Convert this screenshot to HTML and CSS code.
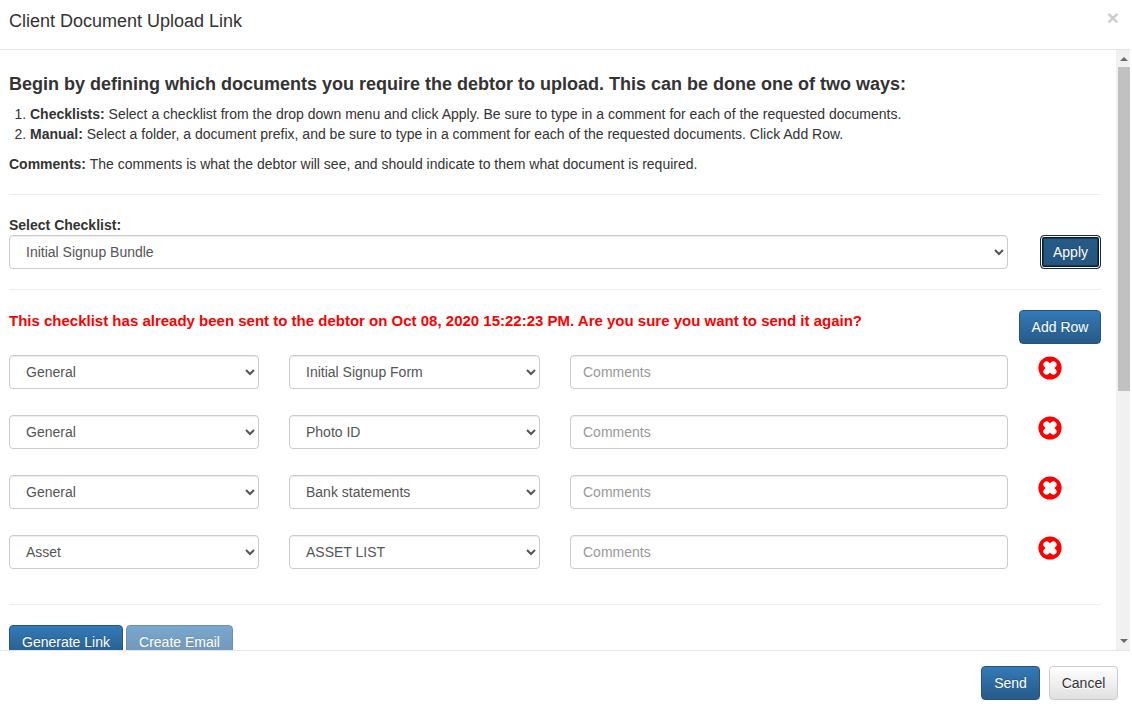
FILE: index.html
```html
<!DOCTYPE html>
<html lang="en">
<head>
<meta charset="utf-8">
<title>Client Document Upload Link</title>
<link rel="stylesheet" href="styles.css">
</head>
<body>
<div class="modal">
  <header class="modal-header">
    <h1 class="modal-title">Client Document Upload Link</h1>
    <span class="close">×</span>
  </header>
  <div class="modal-middle">
    <main class="modal-body">
      <h4 class="intro">Begin by defining which documents you require the debtor to upload. This can be done one of two ways:</h4>
      <ol class="steps">
        <li><b>Checklists:</b> Select a checklist from the drop down menu and click Apply. Be sure to type in a comment for each of the requested documents.</li>
        <li><b>Manual:</b> Select a folder, a document prefix, and be sure to type in a comment for each of the requested documents. Click Add Row.</li>
      </ol>
      <p class="note"><b>Comments:</b> The comments is what the debtor will see, and should indicate to them what document is required.</p>
      <hr class="rule rule-a">
      <div class="checklist">
        <div class="checklist-field">
          <label class="field-label" for="cl">Select Checklist:</label>
          <select id="cl" class="control"><option>Initial Signup Bundle</option></select>
        </div>
        <button class="btn btn-primary btn-focus">Apply</button>
      </div>
      <hr class="rule rule-b">
      <div class="warning-row">
        <p class="warning">This checklist has already been sent to the debtor on Oct 08, 2020 15:22:23 PM. Are you sure you want to send it again?</p>
        <button class="btn btn-primary btn-addrow">Add Row</button>
      </div>
      <div class="rows">
        <div class="row">
          <select class="control"><option>General</option></select>
          <select class="control"><option>Initial Signup Form</option></select>
          <input class="control" placeholder="Comments">
          <svg class="remove" viewBox="0 0 24 24"><circle cx="12" cy="12" r="11.6" fill="#f00"/><path d="M8.6 8.6l6.8 6.8M15.4 8.6l-6.8 6.8" stroke="#fff" stroke-width="6.4" stroke-linecap="round"/></svg>
        </div>
        <div class="row">
          <select class="control"><option>General</option></select>
          <select class="control"><option>Photo ID</option></select>
          <input class="control" placeholder="Comments">
          <svg class="remove" viewBox="0 0 24 24"><circle cx="12" cy="12" r="11.6" fill="#f00"/><path d="M8.6 8.6l6.8 6.8M15.4 8.6l-6.8 6.8" stroke="#fff" stroke-width="6.4" stroke-linecap="round"/></svg>
        </div>
        <div class="row">
          <select class="control"><option>General</option></select>
          <select class="control"><option>Bank statements</option></select>
          <input class="control" placeholder="Comments">
          <svg class="remove" viewBox="0 0 24 24"><circle cx="12" cy="12" r="11.6" fill="#f00"/><path d="M8.6 8.6l6.8 6.8M15.4 8.6l-6.8 6.8" stroke="#fff" stroke-width="6.4" stroke-linecap="round"/></svg>
        </div>
        <div class="row">
          <select class="control"><option>Asset</option></select>
          <select class="control"><option>ASSET LIST</option></select>
          <input class="control" placeholder="Comments">
          <svg class="remove" viewBox="0 0 24 24"><circle cx="12" cy="12" r="11.6" fill="#f00"/><path d="M8.6 8.6l6.8 6.8M15.4 8.6l-6.8 6.8" stroke="#fff" stroke-width="6.4" stroke-linecap="round"/></svg>
        </div>
      </div>
      <hr class="rule rule-c">
      <div class="actions">
        <button class="btn btn-primary">Generate Link</button>
        <button class="btn btn-primary btn-disabled">Create Email</button>
      </div>
    </main>
    <div class="scrollbar">
      <span class="arrow arrow-up"></span>
      <span class="thumb"></span>
      <span class="track"></span>
      <span class="arrow arrow-down"></span>
    </div>
  </div>
  <footer class="modal-footer">
    <button class="btn btn-primary btn-send">Send</button>
    <button class="btn btn-default">Cancel</button>
  </footer>
</div>
</body>
</html>
```
FILE: styles.css
```css
* { box-sizing: border-box; }
html, body { margin: 0; height: 100%; overflow: hidden; background: #fff; }
body { font: 14px/20px "Liberation Sans", Arial, sans-serif; color: #333; }
.modal { width: 1130px; height: 711px; display: flex; flex-direction: column; }
.modal-header { height: 50px; flex: none; display: flex; justify-content: space-between; border-bottom: 1px solid #e5e5e5; padding: 0 11px 0 9px; }
.modal-title { margin: 11px 0 0; font-size: 18px; line-height: 20px; font-weight: 400; }
.close { font-size: 21px; font-weight: 700; line-height: 21px; color: #000; opacity: .2; margin-top: 7px; }
.modal-middle { flex: 1; min-height: 0; display: flex; }
.modal-body { flex: 1; min-width: 0; overflow: hidden; padding: 0 15px 0 9px; }
.intro { margin: 24px 0 0; font-size: 18px; line-height: 20px; font-weight: 700; }
.steps { margin: 10px 0 0; padding-left: 21px; color: #333; }
.note { margin: 10px 0 0; }
.rule { border: 0; border-top: 1px solid #eee; margin: 0; }
.rule-a { margin-top: 20px; }
.rule-b { margin-top: 20px; }
.rule-c { margin-top: 35px; }
.checklist { display: flex; align-items: flex-end; gap: 32px; margin-top: 20px; }
.checklist-field { flex: 1; min-width: 0; }
.field-label { display: block; font-weight: 700; line-height: 20px; }
.control { display: block; height: 34px; width: 100%; padding: 6px 12px; font: 14px/20px "Liberation Sans", Arial, sans-serif; color: #555; background: #fff; border: 1px solid #ccc; border-radius: 4px; box-shadow: inset 0 1px 1px rgba(0,0,0,.075); }
.control::placeholder { color: #999; opacity: 1; }
.warning-row { display: flex; justify-content: space-between; align-items: flex-start; margin-top: 20px; }
.warning { margin: 1px 0 0; font-weight: 700; color: #f00; font-size: 15px; }
.rows { display: flex; flex-direction: column; gap: 26px; margin-top: 11px; }
.row { display: grid; grid-template-columns: 250px 251px 438px 24px; column-gap: 30px; align-items: start; }
.remove { width: 24px; height: 24px; margin-top: 1px; }
.actions { display: flex; gap: 3px; margin-top: 20px; }
.btn { font: 14px/20px "Liberation Sans", Arial, sans-serif; height: 34px; padding: 6px 0; border: 1px solid #245580; border-radius: 4px; white-space: nowrap; width: 114px; }
.btn-primary { color: #fff; background: linear-gradient(#337ab7, #265a88); text-shadow: 0 -1px 0 rgba(0,0,0,.2); }
.btn-disabled { opacity: .65; width: 107px; }
.btn-focus { width: 61px; background: linear-gradient(#265a88, #245580); border-color: #122b40; box-shadow: inset 0 0 0 1px #fff, inset 0 0 0 2.5px #0d1a26; }
.btn-addrow { width: 82px; }
.btn-send { width: 59px; }
.btn-default { width: 69px; color: #333; background: linear-gradient(#fff, #e0e0e0); border-color: #ccc; text-shadow: 0 1px 0 #fff; }
.scrollbar { width: 14px; flex: none; display: flex; flex-direction: column; background: #f1f1f1; }
.arrow { height: 17px; flex: none; position: relative; }
.arrow::after { content: ""; position: absolute; left: 4px; border: 4px solid transparent; }
.arrow-up::after { top: 3px; border-bottom-color: #6a6a6a; }
.arrow-down::after { top: 6px; border-top-color: #6a6a6a; }
.thumb { height: 324px; flex: none; background: #c1c1c1; margin-left: 2px; }
.track { flex: 1; }
.modal-footer { height: 61px; flex: none; border-top: 1px solid #e5e5e5; display: flex; justify-content: flex-end; align-items: flex-start; gap: 9px; padding: 15px 12px 0 0; }
```
